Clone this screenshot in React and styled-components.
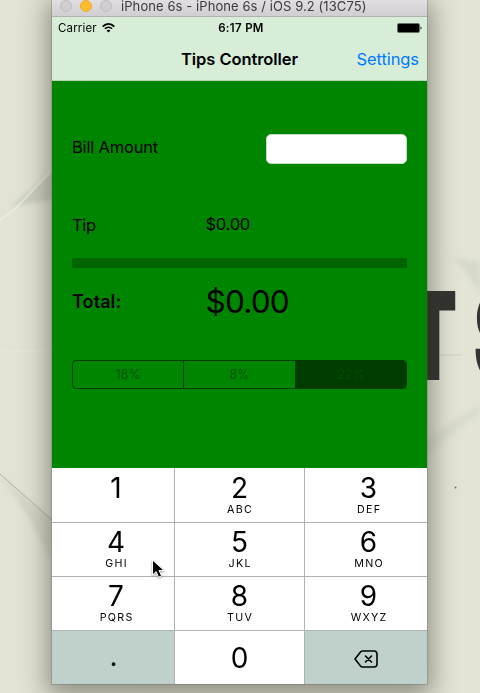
import React from 'react';
import styled, { createGlobalStyle } from 'styled-components';

const Global = createGlobalStyle`
  * { box-sizing: border-box; }
  body { margin: 0; font-family: Inter, "Liberation Sans", sans-serif; color: #000; }
`;

const Desktop = styled.main`
  position: relative;
  width: 480px;
  height: 693px;
  overflow: hidden;
  padding-left: 52px;
  background: linear-gradient(90deg, #e2e3d5, #dfe0d2 50%, #e3e4d6);
`;

const Creases = styled.svg`
  position: absolute;
  inset: 0;
`;

const Lettering = styled.div`
  position: absolute;
  left: 407px;
  top: 262px;
  font-size: 122px;
  line-height: 148px;
  font-weight: 900;
  letter-spacing: 27px;
  white-space: nowrap;
  color: #333331;
  transform: scaleX(0.6);
  transform-origin: 0 0;
`;

const Simulator = styled.section`
  position: relative;
  display: flex;
  flex-direction: column;
  width: 375px;
  height: 684px;
  box-shadow: 0 0 0 1px rgba(95, 95, 85, 0.3), 0 7px 24px 5px rgba(45, 45, 35, 0.46);
`;

const TitleBar = styled.header`
  display: flex;
  align-items: flex-start;
  height: 17px;
  padding-left: 8px;
  background: linear-gradient(#e1dfe1, #d0ced0);
  border-bottom: 1px solid #b3b1b0;
`;

const Light = styled.i`
  width: 12px;
  height: 12px;
  margin-right: 8px;
  border-radius: 50%;
  background: ${p => (p.$on ? '#ffbd2e' : '#cfcdcf')};
  border: 1px solid ${p => (p.$on ? '#e8aa32' : '#bfbdbf')};
`;

const WindowTitle = styled.span`
  margin-left: 1px;
  font-size: 13px;
  line-height: 13px;
  letter-spacing: 0.08px;
  color: #3c3a3c;
  white-space: nowrap;
`;

const StatusBar = styled.div`
  display: grid;
  grid-template-columns: 1fr auto 1fr;
  align-items: center;
  height: 20px;
  padding: 1px 5px 0 6px;
  background: #d7edd7;
  font-size: 11.5px;
`;

const Carrier = styled.span`
  display: flex;
  align-items: center;
  gap: 5px;
  letter-spacing: 0.15px;
`;

const Clock = styled.b`
  margin-left: 2px;
  font-weight: 600;
  font-size: 11.5px;
  letter-spacing: 0.3px;
`;

const Battery = styled.svg`
  justify-self: end;
`;

const NavBar = styled.nav`
  display: grid;
  grid-template-columns: 1fr auto 1fr;
  align-items: center;
  height: 44px;
  padding-right: 8px;
  background: #d7edd7;
  border-bottom: 1px solid #b5d4b5;
`;

const NavTitle = styled.h1`
  grid-column: 2;
  margin: 0 -4px 0 4px;
  font-size: 16.5px;
  font-weight: 600;
  letter-spacing: -0.07px;
`;

const NavLink = styled.a`
  justify-self: end;
  font-size: 16.5px;
  letter-spacing: -0.08px;
  color: #007aff;
`;

const Content = styled.div`
  height: 387px;
  padding: 53px 20px 0;
  background: #008500;
`;

const Row = styled.div`
  display: grid;
  grid-template-columns: 133.5px 1fr;
  align-items: center;
  height: ${p => p.$height}px;
  margin-top: ${p => p.$gap || 0}px;
`;

const BillRow = styled(Row)`
  grid-template-columns: 1fr 141px;
`;

const Label = styled.label`
  margin-bottom: ${p => p.$lift || 0}px;
  font-size: ${p => p.$size || 16.5}px;
  font-weight: ${p => (p.$bold ? 600 : 400)};
  letter-spacing: ${p => p.$track || 0}px;
  line-height: 1;
`;

const BillInput = styled.input`
  width: 141px;
  height: 30px;
  border: 1px solid #c8ddc4;
  border-radius: 5px;
  background: #fff;
  outline: none;
`;

const Divider = styled.div`
  height: 10px;
  margin-top: 23px;
  background: #006400;
`;

const Segments = styled.div`
  display: grid;
  grid-template-columns: 111px 112px 1fr;
  height: 29px;
  margin-top: 40px;
  border: 1px solid #003c00;
  border-radius: 4px;
  overflow: hidden;
`;

const Segment = styled.button`
  padding: 0;
  border: 0;
  border-right: ${p => (p.$selected ? '0' : '1px solid #003c00')};
  background: ${p => (p.$selected ? '#003c00' : 'transparent')};
  color: ${p => (p.$selected ? '#004b00' : '#005800')};
  font: 12.5px Inter, sans-serif;
`;

const Keypad = styled.div`
  display: grid;
  grid-template-columns: 123px 130px 122px;
  grid-template-rows: 55px 54px 54px 53px;
  height: 216px;
`;

const Key = styled.button`
  display: flex;
  flex-direction: column;
  align-items: center;
  justify-content: flex-start;
  padding: ${p => p.$top}px 0 0 ${p => p.$left || 0}px;
  border: 0 solid #aeb2b0;
  border-right-width: ${p => (p.$last ? 0 : 1)}px;
  border-bottom-width: ${p => (p.$single ? 0 : 1)}px;
  background: ${p => (p.$muted ? '#bfd1ca' : '#fff')};
  font-family: Inter, sans-serif;
  color: #000;
`;

const Digit = styled.span`
  font-size: 28px;
  line-height: 28px;
`;

const Letters = styled.span`
  margin: 1px -1.3px 0 0;
  font-size: 10.7px;
  line-height: 13px;
  letter-spacing: 1.3px;
`;

const DeleteIcon = styled.svg`
  margin-top: 6px;
`;

const Pointer = styled.svg`
  position: absolute;
  left: 151px;
  top: 559px;
  filter: drop-shadow(0 1px 1px rgba(0, 0, 0, 0.4));
`;

const keys = [
  ['1', ''], ['2', 'ABC'], ['3', 'DEF'],
  ['4', 'GHI'], ['5', 'JKL'], ['6', 'MNO'],
  ['7', 'PQRS'], ['8', 'TUV'], ['9', 'WXYZ'],
];

const columns = [{ $left: 6 }, { $left: 0 }, { $left: 5, $last: true }];

export default function App() {
  return (
    <>
      <Global />
      <Desktop>
        <Creases width="480" height="693" fill="none">
          <defs>
            <filter id="soft"><feGaussianBlur stdDeviation="2" /></filter>
          </defs>
          <g filter="url(#soft)">
            <path d="M10 207 52 172V200Z" fill="#c0c1b2" opacity=".6" />
            <path d="M0 476 52 520V560L18 500Z" fill="#c8c8b9" opacity=".5" />
            <path d="M455 258 480 292V262Z" fill="#cfd0c2" opacity=".6" />
            <path d="M427 455 480 412V404L427 438Z" fill="#d2d3c5" opacity=".5" />
          </g>
          <path d="M0 220 16 208 52 170" stroke="#edeee2" strokeWidth="2" opacity=".7" />
          <path d="M0 474 52 520" stroke="#aaa696" opacity=".8" />
          <path d="M0 351H52" stroke="#ecece0" opacity=".6" />
          <path d="M440 355H462" stroke="#c6c5b6" opacity=".6" />
          <circle cx="455.500" cy="487.500" r="1" fill="#806d50" />
        </Creases>
        <Lettering>TS</Lettering>
        <Simulator>
          <TitleBar>
            <Light /><Light $on /><Light />
            <WindowTitle>iPhone 6s - iPhone 6s / iOS 9.2 (13C75)</WindowTitle>
          </TitleBar>
          <StatusBar>
            <Carrier>
              Carrier
              <svg width="13" height="10" viewBox="0 0 13 10" fill="none" stroke="#000" strokeWidth="1.6">
                <path d="M.7 3.600C4-.1 9-.1 12.300 3.600M2.900 5.800c2-2.100 5.200-2.100 7.200 0" />
                <path d="M4.600 7.500c1.100-1.100 2.700-1.100 3.800 0L6.500 9.500Z" fill="#000" stroke="none" />
              </svg>
            </Carrier>
            <Clock>6:17 PM</Clock>
            <Battery width="25" height="10" viewBox="0 0 25 10">
              <rect x=".5" y=".5" width="22" height="9" rx="1.500" fill="#000" stroke="#667066" />
              <path d="M23.500 3.500c1.300.4 1.300 2.600 0 3Z" fill="#000" />
            </Battery>
          </StatusBar>
          <NavBar>
            <NavTitle>Tips Controller</NavTitle>
            <NavLink>Settings</NavLink>
          </NavBar>
          <Content>
            <BillRow $height={30}>
              <Label $track={-0.18} $lift={3}>Bill Amount</Label>
              <BillInput aria-label="Bill Amount" />
            </BillRow>
            <Row $height={20} $gap={51}>
              <Label $track={-0.3}>Tip</Label>
              <Label $track={-0.25} $lift={2}>$0.00</Label>
            </Row>
            <Divider />
            <Row $height={36} $gap={16}>
              <Label $size={18} $track={0.1} $bold>Total:</Label>
              <Label $size={31.5} $track={-0.8}>$0.00</Label>
            </Row>
            <Segments>
              <Segment>18%</Segment>
              <Segment>8%</Segment>
              <Segment $selected>22%</Segment>
            </Segments>
          </Content>
          <Keypad>
            {keys.map(([digit, letters], i) => (
              <Key key={digit} $top={i < 3 ? 6 : 5} {...columns[i % 3]}>
                <Digit>{digit}</Digit>
                {letters && <Letters>{letters}</Letters>}
              </Key>
            ))}
            <Key $top={11} $left={1} $single $muted><Digit>.</Digit></Key>
            <Key $top={13} $single><Digit>0</Digit></Key>
            <Key $top={13} $single $muted $last>
              <DeleteIcon width="24" height="18" viewBox="0 0 24 18" fill="none" stroke="#000" strokeWidth="1.600" strokeLinejoin="round" strokeLinecap="round">
                <path d="M8.500 1H20a3 3 0 0 1 3 3v10a3 3 0 0 1-3 3H8.500Q7.500 17 6.500 16L1 9 6.500 2Q7.500 1 8.500 1Z" />
                <path d="m11.500 6 6 6m0-6-6 6" />
              </DeleteIcon>
            </Key>
          </Keypad>
        </Simulator>
        <Pointer width="16" height="22" viewBox="0 0 16 22">
          <path d="M1.500 1v15l3.600-3.400 2.500 5.600 3-1.300-2.500-5.400h5Z" fill="#000" stroke="#fff" />
        </Pointer>
      </Desktop>
    </>
  );
}
